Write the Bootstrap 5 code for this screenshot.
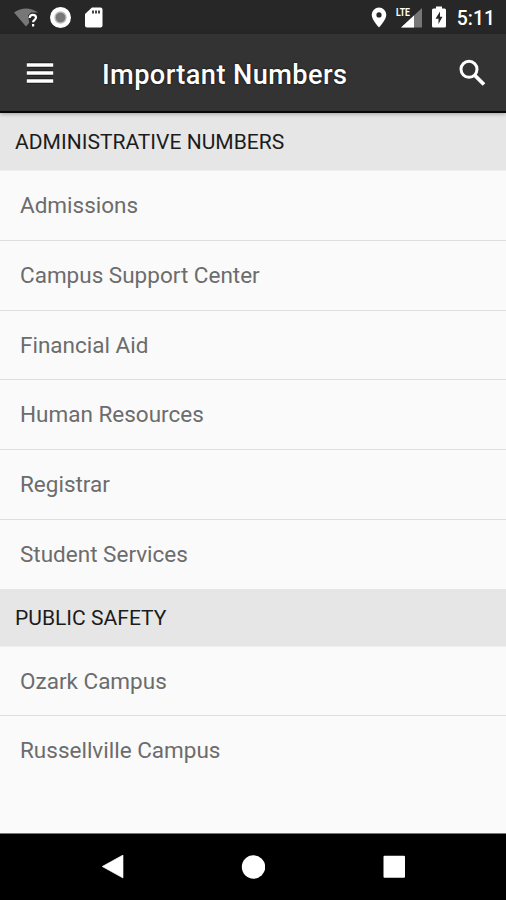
<!DOCTYPE html>
<html lang="en">
<head>
<meta charset="utf-8">
<meta name="viewport" content="width=device-width, initial-scale=1">
<title>Important Numbers</title>
<link href="https://cdn.jsdelivr.net/npm/bootstrap@5.3.0/dist/css/bootstrap.min.css" rel="stylesheet">
<style>
body { font-family: Roboto, "Liberation Sans", sans-serif; background: #fafafa; height: 900px; overflow: hidden; }
svg { display: block; flex: none; }
.status-bar { height: 34px; background: #272727; padding: 0 11px 0 14px; }
.clock { font-size: 19.4px; font-weight: 500; line-height: 34px; color: #fff; margin-left: 10px; padding-top: 3px; }
.app-bar { height: 79px; background: #333; border-bottom: 2px solid #080808; padding: 0 20px 0 26px; box-shadow: 0 1px 4px rgba(0,0,0,.3); z-index: 1; }
.app-title { font-size: 27.2px; font-weight: 500; line-height: 32px; color: #fff; margin: 4px 0 0 48px; text-shadow: 0 0 2px #000; letter-spacing: .4px; }
.section-title { height: 57px; flex: none; background: #e6e6e6; color: #1c1c1c; font-size: 21.05px; line-height: 57px; padding: 0 15px; font-weight: 400; }
.number-row { height: 69.75px; line-height: 68.4px; padding: 0 20px; font-size: 22.5px; color: #6c6c6c; background: #fafafa; border-top: 1px solid #dedede; }
.number-row:first-child { border-top-color: #f0f0f0; }
.nav-keys { height: 67px; background: #000; border-top: 1px solid #777; padding: 0 101px; }
</style>
</head>
<body class="d-flex flex-column m-0">
<header class="status-bar d-flex align-items-center flex-shrink-0">
  <svg width="24" height="34" viewBox="0 0 24 34"><path d="M0 12.500Q12 4.500 24 12.500L12 26.500Z" fill="#777"/><path d="M14 15.500 17 12.500h7v14h-8z" fill="#272727"/><path d="M15.600 18q.2-3.200 3.300-3.200t3.100 2.800c0 2.200-2.900 2.300-2.900 4.700M19.100 24v2.500" fill="none" stroke="#fff" stroke-width="2.200"/></svg>
  <svg class="ms-2 ps-1" width="26" height="34" viewBox="1 0 22 34"><circle cx="11.500" cy="17.500" r="10.500" fill="#fff"/><circle cx="11.500" cy="17.500" r="6.200" fill="#bbb"/><circle cx="11.500" cy="17.500" r="4.800" fill="#777"/></svg>
  <svg class="ms-2 ps-1" width="24" height="34" viewBox="0 0 20 34"><path d="M8 7.500H16.500q2 0 2 2v16q0 2-2 2H3q-2 0-2-2V14Z" fill="#fff"/><path d="M8 10.500h2v3H8zm3 0h2v3h-2zm3 0h2v3h-2z" fill="#444"/></svg>
  <svg class="ms-auto" width="16" height="34" viewBox="0 0 16 34"><path fill-rule="evenodd" d="M8 7.500a7.300 7.300 0 0 0-7.300 7.300C.7 20 8 27.500 8 27.500S15.300 20 15.300 14.800A7.300 7.300 0 0 0 8 7.500Zm0 4.800a2.600 2.600 0 1 1 0 5.200 2.600 2.600 0 0 1 0-5.200Z" fill="#fff"/></svg>
  <svg class="ms-2" width="28" height="34" viewBox="0 0 28 34"><path d="M27 8v19.500H6Z" fill="#777"/><path d="M19 15.500v12H6Z" fill="#fff"/><path d="M0 5h16v11H0z" fill="#272727"/><text x="1" y="16" font-size="11.500" font-weight="700" textLength="14" lengthAdjust="spacingAndGlyphs" fill="#fff">LTE</text></svg>
  <svg class="ms-2" width="16" height="34" viewBox="0 0 16 34"><path d="M5 6.500h6v2h2.500q1.500 0 1.500 1.500V26q0 1.500-1.500 1.500h-11Q1 27.500 1 26V10Q1 8.500 2.500 8.500H5Z" fill="#fff"/><path d="M9 11.500 4.500 18.700h3V24L11.500 16.700H9Z" fill="#272727"/></svg>
  <span class="clock">5:11</span>
</header>
<nav class="app-bar d-flex align-items-center flex-shrink-0 position-relative">
  <svg width="28" height="24" viewBox="0 0 28 24"><path d="M.8 4h26.400M.8 12h26.400M.8 20h26.400" stroke="#000" stroke-opacity=".4" stroke-width="5.400"/><path d="M.8 4h26.400M.8 12h26.400M.8 20h26.400" stroke="#fff" stroke-width="3.400"/></svg>
  <h1 class="app-title">Important Numbers</h1>
  <svg class="ms-auto" width="28" height="28" viewBox="0 0 28 28"><circle cx="11" cy="10.300" r="8" fill="none" stroke="#fff" stroke-width="3"/><path d="m16.500 16 9.500 9.500" stroke="#fff" stroke-width="3.800"/></svg>
</nav>
<main class="flex-grow-1">
  <h2 class="section-title mb-0">ADMINISTRATIVE NUMBERS</h2>
  <div class="list-group list-group-flush rounded-0">
    <div class="number-row">Admissions</div>
    <div class="number-row">Campus Support Center</div>
    <div class="number-row">Financial Aid</div>
    <div class="number-row">Human Resources</div>
    <div class="number-row">Registrar</div>
    <div class="number-row">Student Services</div>
  </div>
  <h2 class="section-title mb-0">PUBLIC SAFETY</h2>
  <div class="list-group list-group-flush rounded-0">
    <div class="number-row">Ozark Campus</div>
    <div class="number-row">Russellville Campus</div>
  </div>
</main>
<footer class="nav-keys d-flex justify-content-between align-items-center flex-shrink-0">
  <svg width="24" height="24" viewBox="0 0 24 24"><path d="M1.200 11.500 22 0v23Z" fill="#fff" stroke="#fff" stroke-linejoin="round" stroke-width=".6"/></svg>
  <svg width="24" height="24" viewBox="0 0 24 24"><circle cx="12.500" cy="12" r="11.700" fill="#fff"/></svg>
  <svg width="24" height="24" viewBox="0 0 24 24"><rect x="2.500" y=".8" width="21.500" height="22" rx="1" fill="#fff"/></svg>
</footer>
<script src="https://cdn.jsdelivr.net/npm/bootstrap@5.3.0/dist/js/bootstrap.bundle.min.js"></script>
</body>
</html>
